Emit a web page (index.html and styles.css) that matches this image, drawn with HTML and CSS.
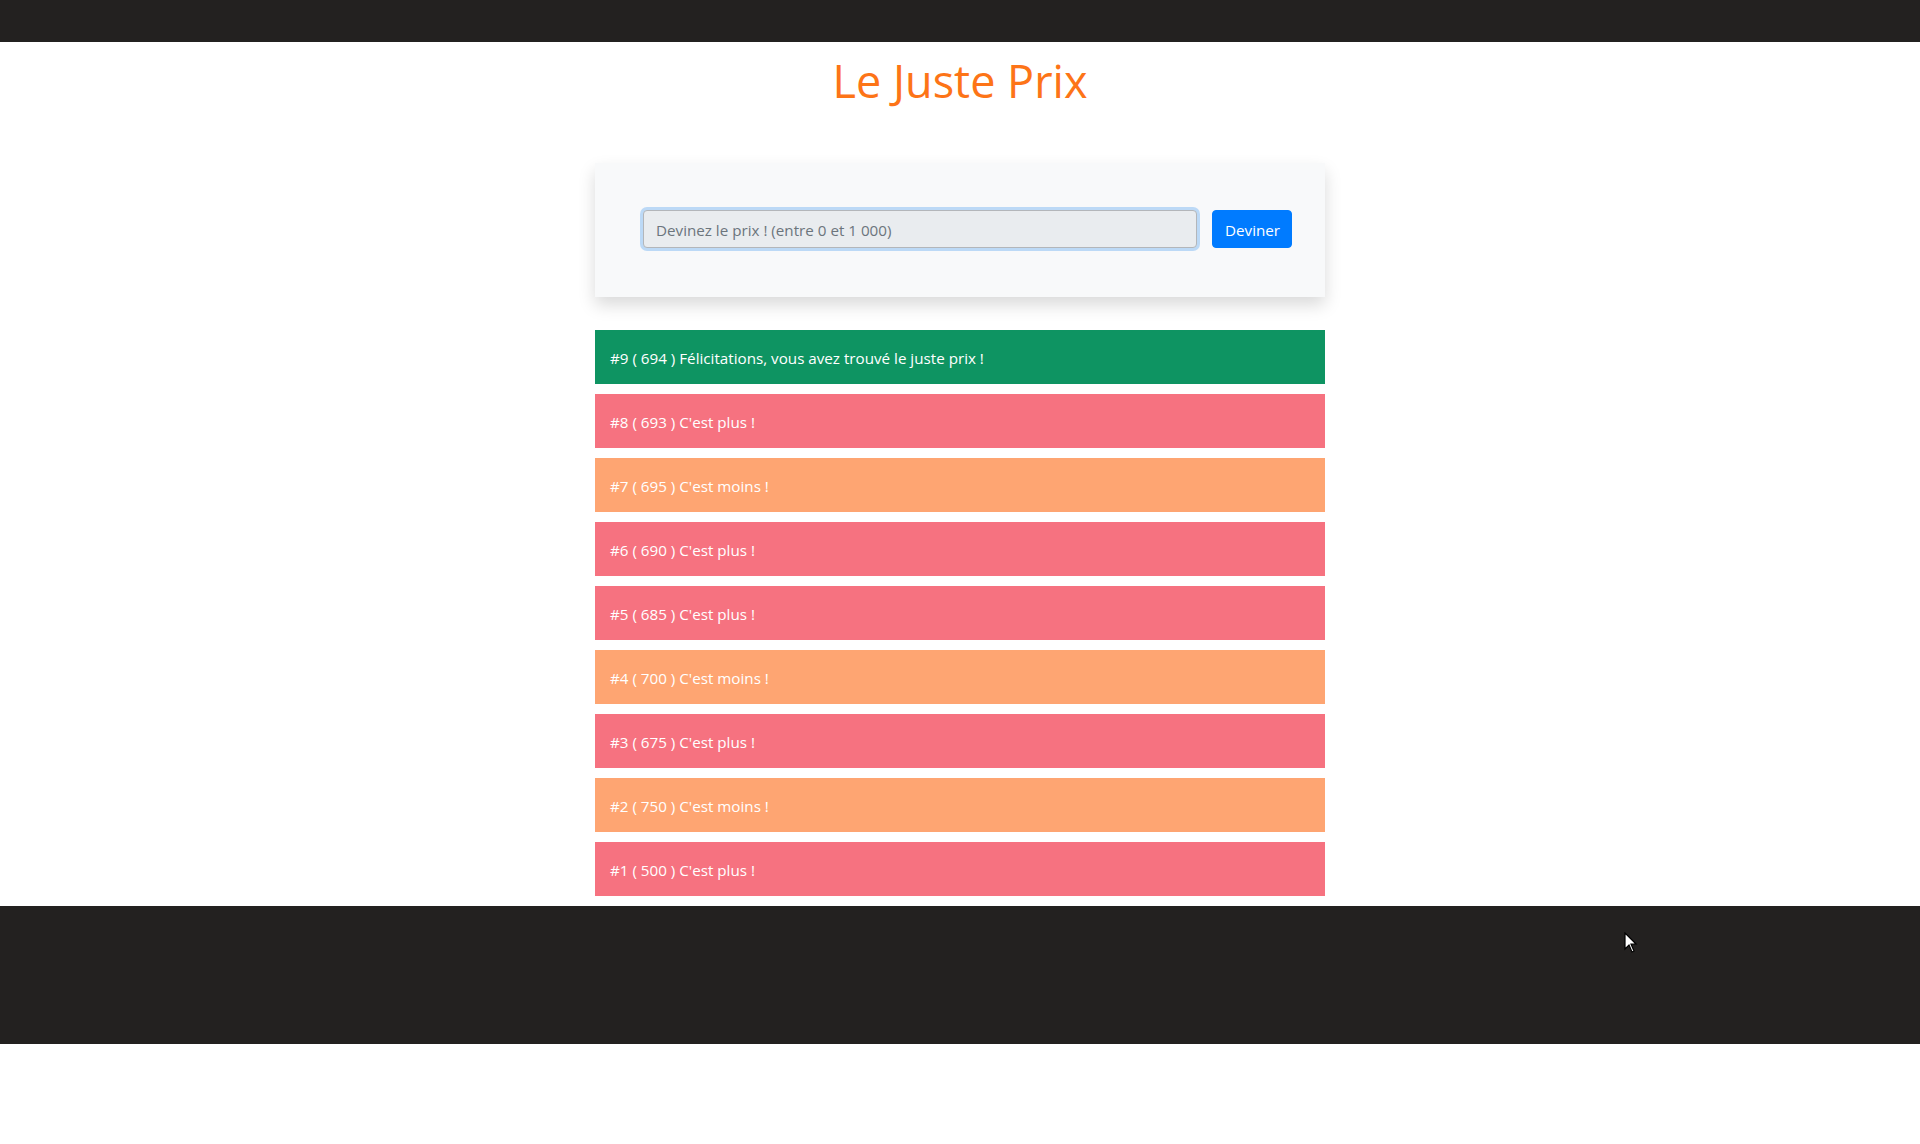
FILE: index.html
```html
<!DOCTYPE html>
<html lang="fr">
<head>
<meta charset="utf-8">
<title>Le Juste Prix</title>
<link rel="stylesheet" href="styles.css">
</head>
<body>
<header class="topbar"></header>
<main class="page">
  <h1 class="title">Le Juste Prix</h1>
  <section class="card">
    <form class="guess-form">
      <input class="guess-input" type="text" placeholder="Devinez le prix ! (entre 0 et 1 000)">
      <button class="guess-btn" type="button">Deviner</button>
    </form>
  </section>
  <ul class="results">
    <li class="result result-win">#9 ( 694 ) Félicitations, vous avez trouvé le juste prix !</li>
    <li class="result result-plus">#8 ( 693 ) C'est plus !</li>
    <li class="result result-moins">#7 ( 695 ) C'est moins !</li>
    <li class="result result-plus">#6 ( 690 ) C'est plus !</li>
    <li class="result result-plus">#5 ( 685 ) C'est plus !</li>
    <li class="result result-moins">#4 ( 700 ) C'est moins !</li>
    <li class="result result-plus">#3 ( 675 ) C'est plus !</li>
    <li class="result result-moins">#2 ( 750 ) C'est moins !</li>
    <li class="result result-plus">#1 ( 500 ) C'est plus !</li>
  </ul>
</main>
<footer class="footer"></footer>
<svg class="cursor" width="14" height="22" viewBox="0 0 14 22" aria-hidden="true">
  <path d="M1 1 L1 17 L5 13 L8 20 L10 19 L7 12 L12 12 Z" fill="#fff" stroke="#000" stroke-width="1.2" stroke-linejoin="miter"/>
</svg>
</body>
</html>
```
FILE: styles.css
```css
* { box-sizing: border-box; }
html, body { margin: 0; padding: 0; }
body {
  font-family: "Open Sans", "Noto Sans", "Liberation Sans", sans-serif;
  font-size: 15.2px;
  line-height: 24px;
  color: #212529;
  background: #fff;
  position: relative;
}
.topbar {
  height: 42px;
  background: #232120;
}
.page {
  width: 730px;
  margin: 0 auto;
}
.title {
  margin: 10px 0 53px;
  font-size: 45px;
  line-height: 58px;
  font-weight: 400;
  color: #fd7417;
  text-align: center;
}
.card {
  background: #f8f9fa;
  padding: 47px 33px 49px 48px;
  box-shadow: 0 8px 16px rgba(0, 0, 0, 0.15);
}
.guess-form {
  display: flex;
  gap: 15px;
  margin: 0;
}
.guess-input {
  flex: 1;
  height: 38px;
  padding: 7px 12px 5px;
  font: inherit;
  font-size: 15.2px;
  line-height: 24px;
  color: #495057;
  background: #e9ecef;
  border: 1px solid #b3b6ba;
  border-radius: 4px;
  box-shadow: 0 0 0 3px #bcd9f6;
  outline: none;
}
.guess-input::placeholder { color: #6c757d; opacity: 1; }
.guess-btn {
  width: 80px;
  height: 38px;
  padding: 7px 12px 5px;
  font: inherit;
  font-size: 15.2px;
  line-height: 24px;
  color: #fff;
  background: #007bff;
  border: 1px solid #007bff;
  border-radius: 4px;
}
.results {
  list-style: none;
  margin: 33px 0 0;
  padding: 0;
}
.result {
  height: 54px;
  padding: 16px 15px 14px;
  margin-bottom: 10px;
  color: #fff;
  font-size: 15.2px;
  line-height: 24px;
}
.result-win { background: #0e9462; }
.result-plus { background: #f67280; }
.result-moins { background: #fea572; }
.footer {
  height: 138px;
  background: #232120;
}
.cursor {
  position: absolute;
  left: 1624px;
  top: 932px;
}
```
